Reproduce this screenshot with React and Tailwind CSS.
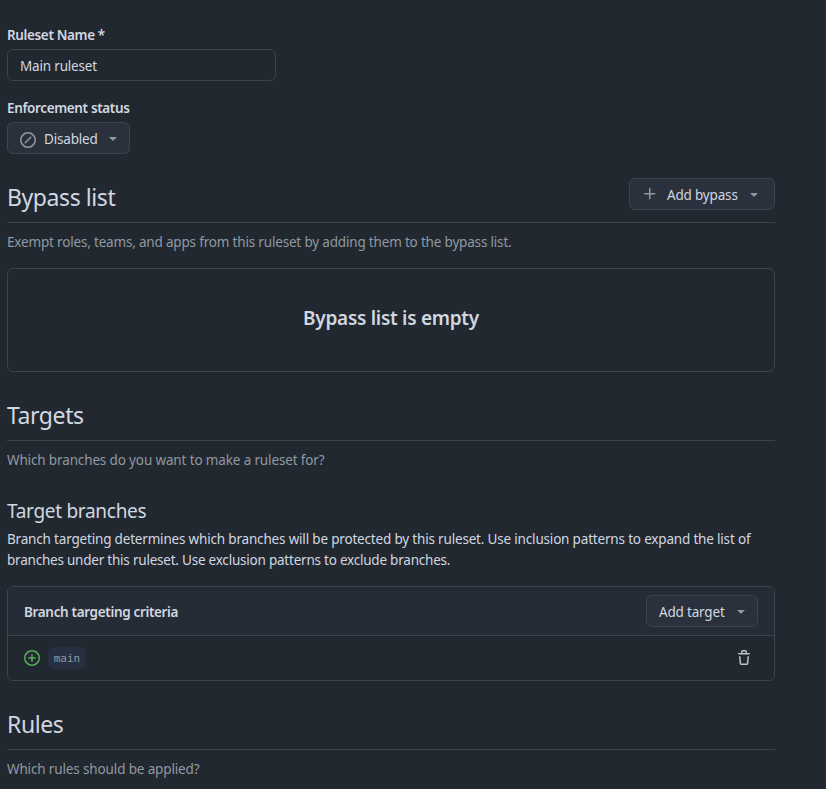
const ICONS = {
  skip: "M8 0a8 8 0 1 1 0 16A8 8 0 0 1 8 0ZM1.5 8a6.5 6.5 0 1 0 13 0 6.5 6.5 0 0 0-13 0Zm9.78-2.22-5.5 5.5a.749.749 0 0 1-1.275-.326.749.749 0 0 1 .215-.734l5.5-5.5a.751.751 0 0 1 1.042.018.751.751 0 0 1 .018 1.042Z",
  plus: "M7.75 2a.75.75 0 0 1 .75.75V7h4.25a.75.75 0 0 1 0 1.5H8.5v4.25a.75.75 0 0 1-1.5 0V8.5H2.75a.75.75 0 0 1 0-1.5H7V2.75A.75.75 0 0 1 7.75 2Z",
  triangleDown: "m4.427 7.427 3.396 3.396a.25.25 0 0 0 .354 0l3.396-3.396A.25.25 0 0 0 11.396 7H4.604a.25.25 0 0 0-.177.427Z",
  plusCircle: "M8 0a8 8 0 1 1 0 16A8 8 0 0 1 8 0ZM1.5 8a6.5 6.5 0 1 0 13 0 6.5 6.5 0 0 0-13 0Zm7.25-3.25v2.5h2.5a.75.75 0 0 1 0 1.5h-2.5v2.5a.75.75 0 0 1-1.5 0v-2.5h-2.5a.75.75 0 0 1 0-1.5h2.5v-2.5a.75.75 0 0 1 1.5 0Z",
  trash: "M11 1.75V3h2.25a.75.75 0 0 1 0 1.5H2.75a.75.75 0 0 1 0-1.5H5V1.75C5 .784 5.784 0 6.75 0h2.5C10.216 0 11 .784 11 1.75ZM4.496 6.675l.66 6.6a.25.25 0 0 0 .249.225h5.19a.25.25 0 0 0 .249-.225l.66-6.6a.75.75 0 0 1 1.492.149l-.66 6.6A1.748 1.748 0 0 1 10.595 15h-5.19a1.75 1.75 0 0 1-1.741-1.575l-.66-6.6a.75.75 0 1 1 1.492-.15ZM6.5 1.75V3h3V1.75a.25.25 0 0 0-.25-.25h-2.5a.25.25 0 0 0-.25.25Z",
};

function Icon({ name, className = "" }) {
  return (
    <svg width="16" height="16" viewBox="0 0 16 16" fill="currentColor" className={`shrink-0 ${className}`}>
      <path d={ICONS[name]} />
    </svg>
  );
}

function Button({ icon, children, className = "" }) {
  return (
    <button
      className={`flex h-8 shrink-0 items-center rounded-md border border-[#3d444d] bg-[#2a313c] pl-3 text-[#d1d7e0] ${className}`}
    >
      {icon}
      <span className="pt-[2px] whitespace-nowrap">{children}</span>
      <Icon name="triangleDown" className="mb-px ml-auto text-[#9198a1]" />
    </button>
  );
}

function SectionHead({ title, children }) {
  return (
    <div className="flex h-[45px] items-start justify-between border-b border-[#3d444d]">
      <h2 className="pt-px text-[23px] leading-9 tracking-[-0.42px]">{title}</h2>
      {children}
    </div>
  );
}

export default function App() {
  return (
    <div className="h-[789px] overflow-hidden bg-[#212830] font-['Noto_Sans',sans-serif] text-[13.5px] leading-[21px] tracking-[-0.18px] text-[#d1d7e0]">
      <main className="ml-[7px] w-[768px] pt-[25px]">
        <label className="block font-semibold tracking-[-0.36px]">Ruleset Name *</label>
        <div className="mt-[3px] flex h-8 w-[269px] items-center rounded-md border border-[#3d444d] px-3 pt-[2px]">
          Main ruleset
        </div>
        <label className="mt-[17px] block font-semibold tracking-[-0.36px]">Enforcement status</label>
        <Button
          className="mt-[3px] w-[123px] pt-px pr-2"
          icon={<Icon name="skip" className="mt-[2px] mr-2 text-[#9198a1]" />}
        >
          Disabled
        </Button>

        <div className="mt-6">
          <SectionHead title="Bypass list">
            <Button
              className="w-[146px] pt-px pr-3"
              icon={<Icon name="plus" className="mr-[9px] mb-px text-[#9198a1]" />}
            >
              Add bypass
            </Button>
          </SectionHead>
        </div>
        <p className="mt-[9px] text-[#9198a1]">
          Exempt roles, teams, and apps from this ruleset by adding them to the bypass list.
        </p>
        <div className="mt-[15px] flex h-[104px] items-center justify-center rounded-md border border-[#3d444d] pb-[3px] text-[19px] font-semibold tracking-[-0.28px]">
          Bypass list is empty
        </div>

        <div className="mt-6">
          <SectionHead title="Targets" />
        </div>
        <p className="mt-[9px] tracking-[-0.14px] text-[#9198a1]">Which branches do you want to make a ruleset for?</p>
        <h3 className="mt-[25px] text-[19px] leading-[30px] tracking-[-0.3px]">Target branches</h3>
        <p className="mt-[3px] whitespace-nowrap">
          Branch targeting determines which branches will be protected by this ruleset. Use inclusion
          patterns to expand the list of
          <br />
          <span className="tracking-[-0.22px]">
            branches under this ruleset. Use exclusion patterns to exclude branches.
          </span>
        </p>
        <div className="mt-[15px] h-[95px] overflow-hidden rounded-md border border-[#3d444d]">
          <div className="flex h-[49px] items-center justify-between border-b border-[#3d444d] bg-[#262c36] px-4">
            <span className="pt-[2px] font-semibold tracking-[-0.34px]">Branch targeting criteria</span>
            <Button className="w-[112px] pt-px pr-2">Add target</Button>
          </div>
          <div className="flex h-11 items-center px-4">
            <Icon name="plusCircle" className="text-[#57ab5a]" />
            <code className="ml-2 flex h-[22px] w-[38px] items-center justify-center rounded-md bg-[#263040] font-['DejaVu_Sans_Mono',monospace] text-[11px] tracking-normal text-[#9198a1]">
              main
            </code>
            <Icon name="trash" className="mr-[6px] ml-auto text-[#b9c0c9]" />
          </div>
        </div>

        <div className="mt-6">
          <SectionHead title="Rules" />
        </div>
        <p className="mt-[9px] tracking-[-0.14px] text-[#9198a1]">Which rules should be applied?</p>
      </main>
    </div>
  );
}
